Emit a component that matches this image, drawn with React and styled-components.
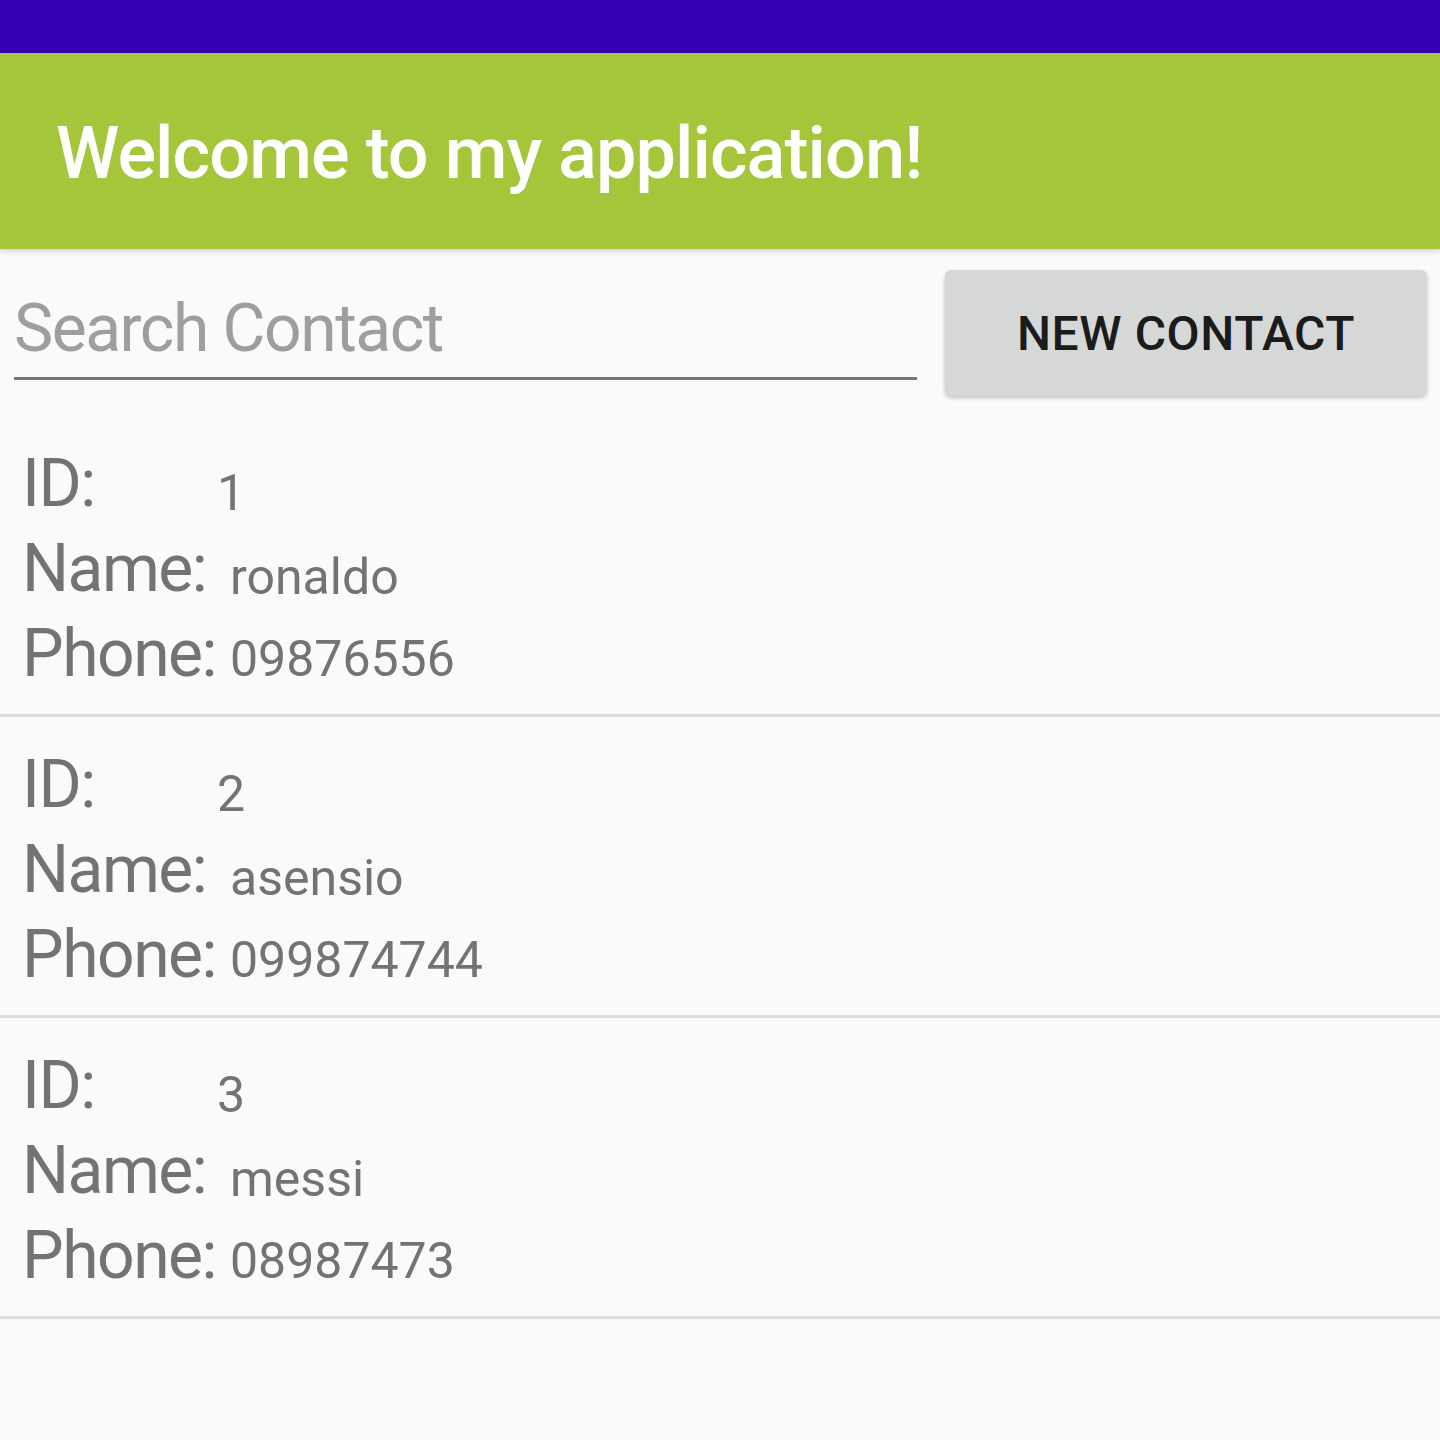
import React from 'react';
import styled, {createGlobalStyle} from 'styled-components';

const contacts = [
    {id: 1, name: 'ronaldo', phone: '09876556'},
    {id: 2, name: 'asensio', phone: '099874744'},
    {id: 3, name: 'messi', phone: '08987473'},
];

export default function App() {
    return (
        <Screen>
            <GlobalStyle/>
            <StatusBar/>
            <Toolbar>
                <Title>Welcome to my application!</Title>
            </Toolbar>
            <SearchRow>
                <SearchInput placeholder="Search Contact"/>
                <NewButton type="button">NEW CONTACT</NewButton>
            </SearchRow>
            <ContactList>
                {contacts.map(c => (
                    <ContactItem key={c.id}>
                        <Label>ID:</Label>
                        <Value $drop={23} $shift={-13}>{c.id}</Value>
                        <Label>Name:</Label>
                        <Value $drop={22}>{c.name}</Value>
                        <Label>Phone:</Label>
                        <Value $drop={19}>{c.phone}</Value>
                    </ContactItem>
                ))}
            </ContactList>
        </Screen>
    );
}

const GlobalStyle = createGlobalStyle`
body {
    margin: 0;
    background: #fafafa;
    font-family: Roboto, "Liberation Sans", sans-serif;
}
`;

const Screen = styled.div`
min-height: 1440px;
background: #fafafa;
`;

const StatusBar = styled.div`
height: 53px;
background: #3700b3;
`;

const Toolbar = styled.header`
height: 196px;
box-sizing: border-box;
padding: 5px 0 0 56px;
display: flex;
align-items: center;
background: #a5c63b;
box-shadow: 0 2px 6px rgba(0, 0, 0, 0.18);
position: relative;
`;

const Title = styled.h1`
margin: 0;
font-size: 72px;
font-weight: 500;
letter-spacing: -0.9px;
color: #ffffff;
line-height: normal;
`;

const SearchRow = styled.div`
display: flex;
align-items: flex-start;
gap: 28px;
padding: 21px 13px 0 14px;
`;

const SearchInput = styled.input`
flex: 1;
height: 110px;
box-sizing: border-box;
padding: 20px 0 10px 0;
border: none;
border-bottom: 3px solid #777777;
background: transparent;
font-family: Roboto, "Liberation Sans", sans-serif;
font-size: 66px;
letter-spacing: -1.5px;
color: #333;
outline: none;
&::placeholder {
    color: #9e9e9e;
}
`;

const NewButton = styled.button`
width: 482px;
height: 126px;
border: none;
border-radius: 6px;
background: #d6d7d7;
box-shadow: 0 2px 4px rgba(0, 0, 0, 0.22);
font-family: Roboto, "Liberation Sans", sans-serif;
font-size: 48px;
font-weight: 500;
letter-spacing: 0.6px;
color: #1b1b1b;
`;

const ContactList = styled.div`
margin-top: 20px;
`;

const ContactItem = styled.div`
display: grid;
grid-template-columns: 208px auto;
grid-auto-rows: 85px;
justify-content: start;
height: 301px;
box-sizing: border-box;
padding: 25px 0 0 22px;
border-bottom: 3px solid #dddddd;
`;

const Label = styled.span`
font-size: 66px;
line-height: 85px;
letter-spacing: -1.5px;
color: #737373;
`;

const Value = styled.span`
align-self: start;
margin-top: ${p => p.$drop}px;
margin-left: ${p => p.$shift || 0}px;
font-size: 50px;
line-height: 58px;
color: #737373;
`;
